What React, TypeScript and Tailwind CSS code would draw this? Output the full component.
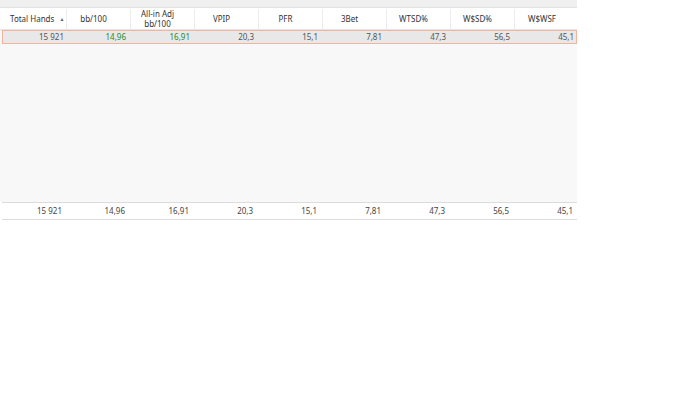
import React from 'react';

const cols = [
  { label: 'Total Hands', sort: true },
  { label: 'bb/100' },
  { label: 'All-in Adj', sub: 'bb/100' },
  { label: 'VPIP' },
  { label: 'PFR' },
  { label: '3Bet' },
  { label: 'WTSD%' },
  { label: 'W$SD%' },
  { label: 'W$WSF' },
];

const row = ['15 921', '14,96', '16,91', '20,3', '15,1', '7,81', '47,3', '56,5', '45,1'];
const green = [1, 2];

export default function App() {
  return (
    <div className="w-[700px] h-[394px] bg-white text-[8px] text-[#444] overflow-hidden" style={{ fontFamily: '"Noto Sans", "Open Sans", sans-serif' }}>
      <div className="w-[577px]">
        <div className="h-[8px] bg-[#f0f0f0] border-b border-[#e2e2e2]" />
        {/* header */}
        <div className="flex h-[21px] bg-white pt-px">
          {cols.map((c, i) => (
            <div
              key={i}
              className={`${i === 0 ? 'w-[67px] pl-[10px] justify-start' : 'w-[64px] justify-center pr-[10px]'} shrink-0 flex items-center whitespace-nowrap border-r border-[#ececec] last:border-r-0 leading-[10px] text-[#333]`}
            >
              {c.sub ? (
                <div className="flex flex-col items-center">
                  <span>{c.label}</span>
                  <span>{c.sub}</span>
                </div>
              ) : (
                <span>{c.label}</span>
              )}
              {c.sort && <span className="ml-[5px] text-[5px] text-[#666]">▲</span>}
            </div>
          ))}
        </div>
        {/* body */}
        <div className="h-[173px] bg-[#f8f8f8] border-t border-[#e6e6e6]">
          <div className="flex h-[14px] bg-[#e8e8e8] border border-[#f2b49c] ml-[2px]">
            {row.map((v, i) => (
              <div
                key={i}
                className={`${i === 0 ? 'w-[63px] pr-[2px]' : 'w-[64px] pr-[4px]'} shrink-0 flex items-center justify-end leading-none ${green.includes(i) ? 'text-[#2a8a2a]' : 'text-[#555]'}`}
              >
                {v}
              </div>
            ))}
          </div>
        </div>
        {/* footer */}
        <div className="flex h-[18px] bg-white border-t border-[#dcdcdc] border-b ml-[2px]">
          {row.map((v, i) => (
            <div
              key={i}
              className={`${i === 0 ? 'w-[63px] pr-[3px]' : 'w-[64px] pr-[4px]'} shrink-0 flex items-center justify-end leading-none text-[#444]`}
            >
              {v}
            </div>
          ))}
        </div>
      </div>
    </div>
  );
}
